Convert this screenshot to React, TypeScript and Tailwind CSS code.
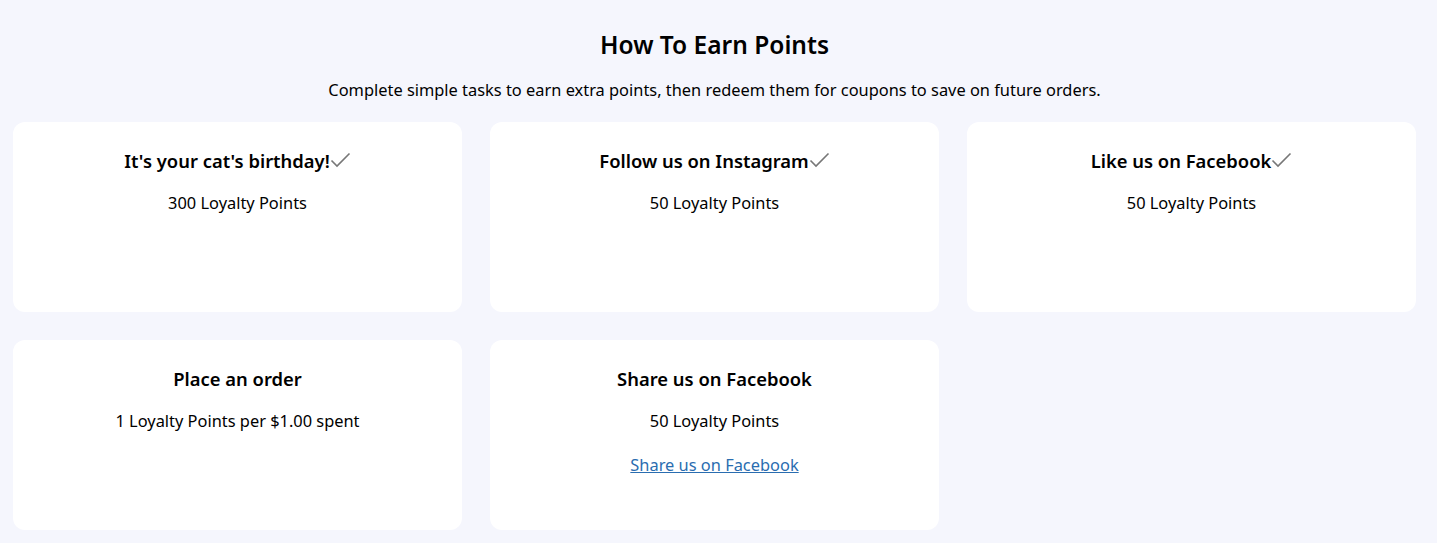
const tasks = [
  { title: "It's your cat's birthday!", points: "300 Loyalty Points", done: true },
  { title: "Follow us on Instagram", points: "50 Loyalty Points", done: true },
  { title: "Like us on Facebook", points: "50 Loyalty Points", done: true },
  { title: "Place an order", points: "1 Loyalty Points per $1.00 spent", done: false },
  { title: "Share us on Facebook", points: "50 Loyalty Points", done: false, link: "Share us on Facebook" },
];

function Check() {
  return (
    <svg width="21" height="16" viewBox="0 0 21 16" className="inline-block -mt-[6px] align-middle" aria-hidden="true">
      <polyline points="1.5,8.5 7,14 19.5,1.5" fill="none" stroke="#777777" strokeWidth="1.6" />
    </svg>
  );
}

export default function App() {
  return (
    <div
      className="min-h-[543px] bg-[#f5f6fd] pl-[13px] pr-[21px] pt-[29px] text-black"
      style={{ fontFamily: '"Noto Sans", "Open Sans", sans-serif' }}
    >
      <h2 className="text-center text-[24.5px] leading-[32px] font-semibold">How To Earn Points</h2>
      <p className="mt-[17px] text-center text-[16.4px] leading-[24px]">
        Complete simple tasks to earn extra points, then redeem them for coupons to save on future orders.
      </p>
      <div className="mt-[20px] grid grid-cols-3 gap-x-[28px] gap-y-[28px]">
        {tasks.map((t) => (
          <div key={t.title} className="min-h-[190px] rounded-[12px] bg-white px-4 pt-[25px] pb-6 text-center">
            <h3 className="text-[18.4px] leading-[28px] font-semibold">
              {t.title}
              {t.done && <Check />}
            </h3>
            <p className="mt-[16px] text-[16.4px] leading-[24px]">{t.points}</p>
            {t.link && (
              <a href="#" className="mt-[20px] inline-block text-[16.4px] leading-[24px] text-[#2a6db0] underline">
                {t.link}
              </a>
            )}
          </div>
        ))}
      </div>
    </div>
  );
}
